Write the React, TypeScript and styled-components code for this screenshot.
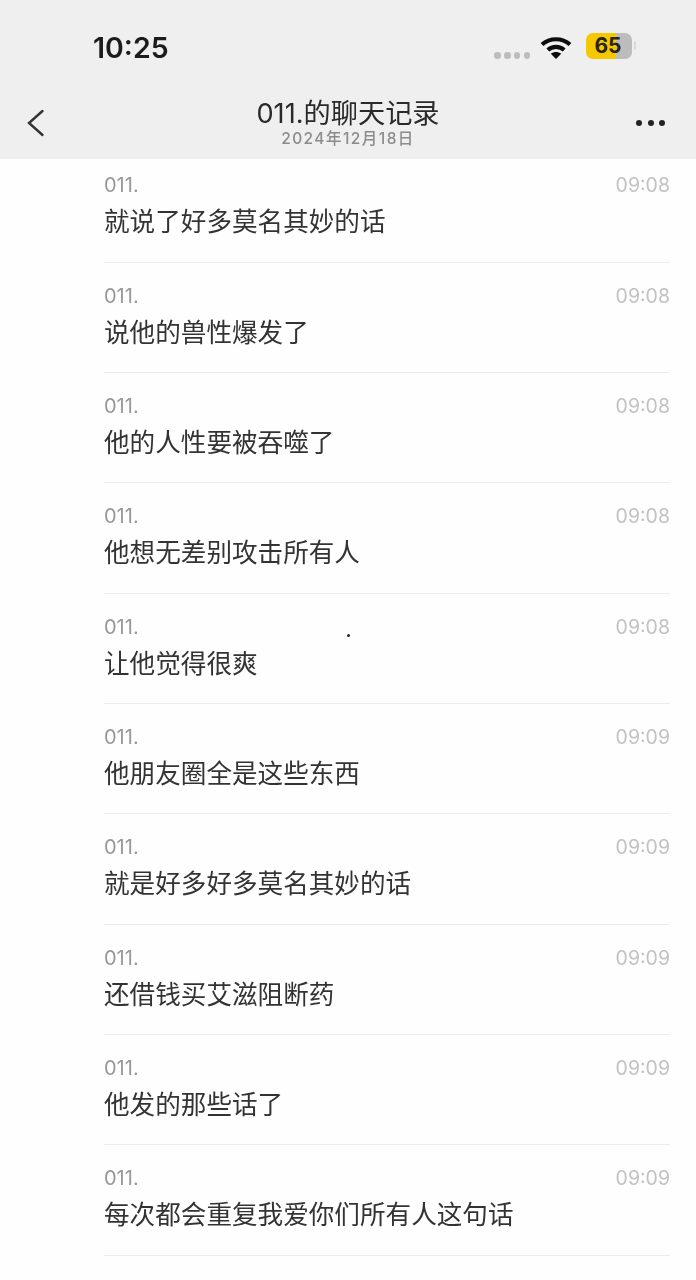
import React from "react";
import styled, { createGlobalStyle } from "styled-components";

const messages = [
  { text: "就说了好多莫名其妙的话", time: "09:08" },
  { text: "说他的兽性爆发了", time: "09:08" },
  { text: "他的人性要被吞噬了", time: "09:08" },
  { text: "他想无差别攻击所有人", time: "09:08" },
  { text: "让他觉得很爽", time: "09:08" },
  { text: "他朋友圈全是这些东西", time: "09:09" },
  { text: "就是好多好多莫名其妙的话", time: "09:09" },
  { text: "还借钱买艾滋阻断药", time: "09:09" },
  { text: "他发的那些话了", time: "09:09" },
  { text: "每次都会重复我爱你们所有人这句话", time: "09:09" },
  { text: "", time: "09:09" },
];

const GlobalStyle = createGlobalStyle`
  html, body {
    margin: 0;
    padding: 0;
    background: #fff;
  }
  body {
    font-family: "Inter", "Noto Sans CJK SC", sans-serif;
  }
`;

const Page = styled.div`
  position: relative;
  width: 696px;
  height: 1280px;
  overflow: hidden;
  background: #fefefe;
`;

const Header = styled.header`
  height: 159px;
  background: #efefef;
  display: flex;
  flex-direction: column;
`;

const StatusBar = styled.div`
  height: 91px;
  display: flex;
  align-items: center;
  padding: 4px 60px 0 93px;
  box-sizing: border-box;
`;

const Clock = styled.div`
  font-size: 28.5px;
  font-weight: 600;
  color: #1c1c1c;
  margin-top: -1px;
  filter: blur(0.4px);
`;

const StatusIcons = styled.div`
  margin-left: auto;
  display: flex;
  align-items: center;
`;

const SignalDots = styled.div`
  display: flex;
  gap: 3.2px;
  margin: 16px 10px 0 0;
  filter: blur(0.4px);
`;

const SignalDot = styled.span`
  width: 6.5px;
  height: 6.5px;
  border-radius: 50%;
  background: #bdbdbd;
`;

const Battery = styled.div`
  position: relative;
  width: 46px;
  height: 26px;
  margin: -4px 0 0 14px;
  padding-right: 2px;
  box-sizing: border-box;
  border-radius: 7px;
  overflow: hidden;
  background: linear-gradient(90deg, #f5c800 0 66%, #bcbcbc 66% 100%);
  display: flex;
  align-items: center;
  justify-content: center;
  font-size: 21px;
  line-height: 26px;
  font-weight: 700;
  color: #2a2415;
`;

const BatteryTip = styled.span`
  width: 2px;
  height: 9px;
  margin: -4px 0 0 2px;
  border-radius: 0 2px 2px 0;
  background: #d8d8d8;
`;

const NavBar = styled.div`
  flex: 1;
  display: grid;
  grid-template-columns: 90px 1fr 90px;
  align-items: start;
`;

const BackButton = styled.div`
  padding: 18px 0 0 27px;
  line-height: 0;
`;

const TitleBlock = styled.div`
  display: flex;
  flex-direction: column;
  align-items: center;
  filter: blur(0.35px);
`;

const Title = styled.div`
  font-size: 27.2px;
  line-height: 44px;
  margin-top: 1px;
  color: #2a2a2a;
  white-space: nowrap;
`;

const DateLine = styled.div`
  font-size: 15.5px;
  font-weight: 500;
  line-height: 18px;
  margin-top: -6px;
  color: #8b8b8b;
  letter-spacing: 1.45px;
  white-space: nowrap;
`;

const MoreButton = styled.div`
  display: flex;
  justify-content: flex-end;
  gap: 5.5px;
  padding: 29px 31px 0 0;
`;

const MoreDot = styled.span`
  width: 6px;
  height: 6px;
  border-radius: 50%;
  background: #222;
`;

const List = styled.div`
  margin: 0 26px 0 104px;
`;

const Row = styled.div<{ $first?: boolean }>`
  height: ${(p) => (p.$first ? "103.7px" : "110.35px")};
  box-sizing: border-box;
  padding-top: ${(p) => (p.$first ? "14px" : "21px")};
  border-bottom: 1.5px solid #ececec;
`;

const RowHead = styled.div`
  display: flex;
  justify-content: space-between;
  align-items: center;
  height: 24px;
  filter: blur(0.3px);
`;

const Sender = styled.span`
  font-size: 20px;
  color: #989898;
`;

const Time = styled.span`
  font-size: 19.5px;
  color: #c2c2c2;
`;

const MessageText = styled.div`
  margin-top: 7px;
  font-size: 25.6px;
  line-height: 36px;
  color: #333;
  white-space: nowrap;
  filter: blur(0.35px);
`;

const Speck = styled.span`
  position: absolute;
  left: 347px;
  top: 634px;
  width: 3px;
  height: 3px;
  border-radius: 50%;
  background: #222;
`;

const WifiIcon = () => (
  <svg width="32" height="26" viewBox="0 0 32 26" fill="none" stroke="#0c0c0c" strokeWidth="4.2">
    <path d="M2 9.5C9.8 2.5 22.2 2.5 30 9.5" />
    <path d="M7.8 15C12.4 10.9 19.6 10.9 24.2 15" />
    <path d="M16 24l-5.2-5.2c2.9-2.4 7.5-2.4 10.4 0z" fill="#0c0c0c" stroke="none" />
  </svg>
);

const BackIcon = () => (
  <svg width="18" height="28" viewBox="0 0 18 28" fill="none" stroke="#333" strokeWidth="2.4" strokeLinecap="round">
    <path d="M15.5 2L2 14L15.5 26" />
  </svg>
);

const App: React.FC = () => {
  return (
    <Page>
      <GlobalStyle />
      <Header>
        <StatusBar>
          <Clock>10:25</Clock>
          <StatusIcons>
            <SignalDots>
              <SignalDot />
              <SignalDot />
              <SignalDot />
              <SignalDot />
            </SignalDots>
            <WifiIcon />
            <Battery>65</Battery>
            <BatteryTip />
          </StatusIcons>
        </StatusBar>
        <NavBar>
          <BackButton>
            <BackIcon />
          </BackButton>
          <TitleBlock>
            <Title>011.的聊天记录</Title>
            <DateLine>2024年12月18日</DateLine>
          </TitleBlock>
          <MoreButton>
            <MoreDot />
            <MoreDot />
            <MoreDot />
          </MoreButton>
        </NavBar>
      </Header>
      <List>
        {messages.map((m, i) => (
          <Row key={i} $first={i === 0}>
            <RowHead>
              <Sender>011.</Sender>
              <Time>{m.time}</Time>
            </RowHead>
            <MessageText>{m.text}</MessageText>
          </Row>
        ))}
      </List>
      <Speck />
    </Page>
  );
};

export default App;
